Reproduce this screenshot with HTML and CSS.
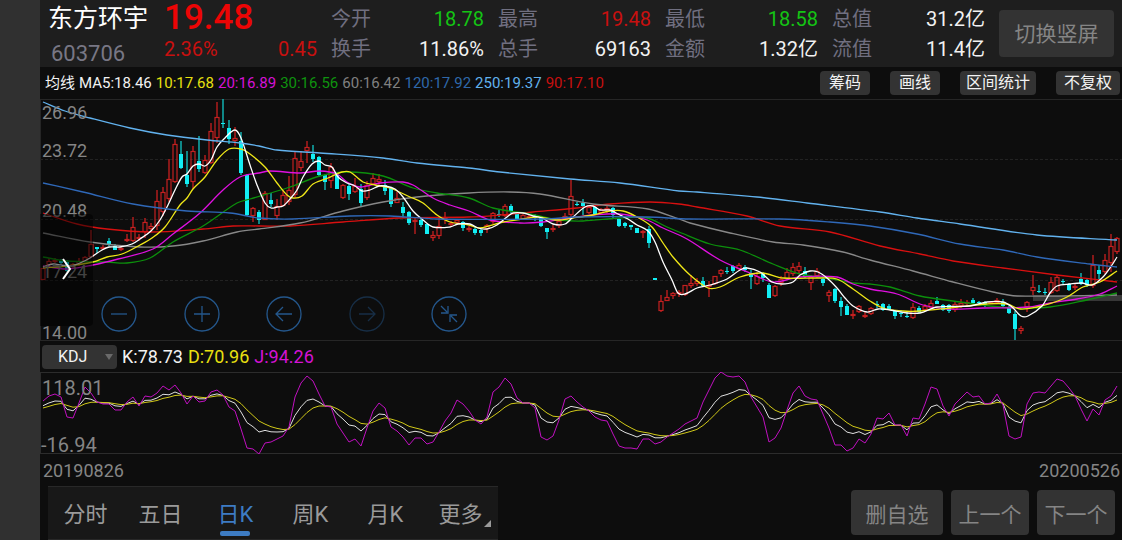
FILE: index.html
```html
<!DOCTYPE html>
<html lang="zh-CN">
<head>
<meta charset="utf-8">
<meta name="viewport" content="width=device-width, initial-scale=1">
<title>东方环宇 603706</title>
<link rel="stylesheet" href="styles.css">
</head>
<body>
<div class="app">
  <main class="screen">
    <header class="quote">
      <div class="identity">
        <h1 class="name">东方环宇</h1>
        <div class="code">603706</div>
      </div>
      <div class="price up">
        <div class="last">19.48</div>
        <div class="change"><span>2.36%</span><span>0.45</span></div>
      </div>
      <dl class="stats">
        <div><dt>今开</dt><dd class="down">18.78</dd></div>
        <div><dt>换手</dt><dd>11.86%</dd></div>
      </dl>
      <dl class="stats">
        <div><dt>最高</dt><dd class="up">19.48</dd></div>
        <div><dt>总手</dt><dd>69163</dd></div>
      </dl>
      <dl class="stats">
        <div><dt>最低</dt><dd class="down">18.58</dd></div>
        <div><dt>金额</dt><dd>1.32亿</dd></div>
      </dl>
      <dl class="stats">
        <div><dt>总值</dt><dd>31.2亿</dd></div>
        <div><dt>流值</dt><dd>11.4亿</dd></div>
      </dl>
      <button class="rotate" type="button">切换竖屏</button>
    </header>

    <div class="averages">
      <div class="legend">
        <span>均线</span>
        <span>MA5:18.46</span>
        <span class="ma10">10:17.68</span>
        <span class="ma20">20:16.89</span>
        <span class="ma30">30:16.56</span>
        <span class="ma60">60:16.42</span>
        <span class="ma120">120:17.92</span>
        <span class="ma250">250:19.37</span>
        <span class="ma90">90:17.10</span>
      </div>
      <div class="tools">
        <button type="button">筹码</button>
        <button type="button">画线</button>
        <button type="button" class="wide">区间统计</button>
        <button type="button">不复权</button>
      </div>
    </div>

    <section class="candles" aria-label="日K">
      <svg id="kline" class="plot" viewBox="40 99 1082 241" preserveAspectRatio="none"></svg>
      <span class="axis a1">26.96</span>
      <span class="axis a2">23.72</span>
      <span class="axis a3">20.48</span>
      <span class="axis a4">17.24</span>
      <span class="axis a5">14.00</span>
      <button class="drawer" type="button" aria-label="展开">
        <svg width="12" height="24" viewBox="0 0 12 24"><path d="M2 2 9 12 2 22"/></svg>
      </button>
      <div class="controls">
        <button type="button" aria-label="缩小"><svg viewBox="0 0 36 36"><circle cx="18" cy="18" r="17"/><path d="M10 18h16"/></svg></button>
        <button type="button" aria-label="放大"><svg viewBox="0 0 36 36"><circle cx="18" cy="18" r="17"/><path d="M10 18h16M18 10v16"/></svg></button>
        <button type="button" aria-label="左移"><svg viewBox="0 0 36 36"><circle cx="18" cy="18" r="17"/><path d="M26 18H10M17 11l-7 7 7 7"/></svg></button>
        <button type="button" aria-label="右移" disabled><svg viewBox="0 0 36 36"><circle cx="18" cy="18" r="17"/><path d="M10 18h16M19 11l7 7-7 7"/></svg></button>
        <button type="button" aria-label="收起"><svg viewBox="0 0 36 36"><circle cx="18" cy="18" r="17"/><path d="M10 10l6 6M17 10v7h-7M26 26l-6-6M19 26v-7h7"/></svg></button>
      </div>
    </section>

    <div class="indicator">
      <div class="picker">
        <select aria-label="指标"><option>KDJ</option></select>
        <svg width="8" height="6" viewBox="0 0 8 6"><path d="M0 0h8L4 6z"/></svg>
      </div>
      <span>K:78.73</span>
      <span class="ma10">D:70.96</span>
      <span class="ma20">J:94.26</span>
    </div>

    <section class="kdj" aria-label="KDJ">
      <svg id="kdj" class="plot" viewBox="40 372 1082 82" preserveAspectRatio="none"></svg>
      <span class="axis k1">118.01</span>
      <span class="axis k2">-16.94</span>
    </section>

    <div class="dates"><span>20190826</span><span>20200526</span></div>

    <footer class="bottom">
      <nav class="tabs">
        <a href="#">分时</a>
        <a href="#">五日</a>
        <a href="#" class="active" aria-current="page">日K</a>
        <a href="#">周K</a>
        <a href="#">月K</a>
        <a href="#" class="more">更多</a>
      </nav>
      <div class="actions">
        <button type="button" class="remove">删自选</button>
        <button type="button">上一个</button>
        <button type="button">下一个</button>
      </div>
    </footer>
  </main>
</div>
<script src="chart.js"></script>
</body>
</html>
```
FILE: styles.css
```css
* { box-sizing: border-box; }

body {
  margin: 0;
  background: #0d0d0d;
  color: #f2f2f2;
  font-family: Roboto, "Noto Sans CJK SC", sans-serif;
}

button, select {
  font: inherit;
  color: inherit;
  border: 0;
  margin: 0;
  padding: 0;
  cursor: pointer;
}

h1, dl, dd { margin: 0; }

.app {
  min-height: 100vh;
  padding-left: 40px;
  background: #303030;
}

.screen {
  min-height: 100vh;
  display: flex;
  flex-direction: column;
  background: #0d0d0d;
}

.up { color: #c8100f; }
.down { color: #14c414; }
.ma10 { color: #e8e010; }
.ma20 { color: #d512d5; }
.ma30 { color: #0f930f; }
.ma60 { color: #808080; }
.ma120 { color: #2f68aa; }
.ma250 { color: #62b2ee; }
.ma90 { color: #c8100f; }

/* Quote header */
.quote {
  display: grid;
  grid-template-columns: 102px repeat(5, 1fr) 115px;
  gap: 14px;
  height: 67px;
  padding: 0 8px;
  background: #1e1e1e;
  font-size: 20px;
  line-height: 30px;
  white-space: nowrap;
}

.name {
  font-size: 25px;
  font-weight: 400;
  line-height: 38px;
  color: #fff;
}

.code {
  padding-left: 3px;
  font-size: 22px;
  line-height: 32px;
  color: #787785;
}

.last {
  font-size: 35px;
  font-weight: 500;
  line-height: 36px;
  color: #ec0505;
}

.change {
  display: flex;
  justify-content: space-between;
  line-height: 26px;
}

.stats { padding-top: 4px; }

.stats div {
  display: flex;
  justify-content: space-between;
}

.stats dt { color: #706f80; }

.rotate {
  height: 47px;
  margin-top: 10px;
  border-radius: 4px;
  background: #333;
  color: #858585;
  font-size: 21px;
}

/* Moving averages */
.averages {
  display: flex;
  justify-content: space-between;
  align-items: center;
  height: 32px;
  padding: 0 2px 0 5px;
  font-size: 15px;
  line-height: 24px;
  white-space: nowrap;
}

.legend, .tools { display: flex; }
.legend { gap: 4px; align-items: baseline; }
.tools { gap: 20px; }

.tools button {
  min-width: 50px;
  height: 24px;
  padding: 0 8px;
  border-radius: 4px;
  background: #333;
  font-size: 16px;
  line-height: 24px;
}

.tools .wide { padding: 0 6px; }

/* Plots */
.candles, .kdj { position: relative; }
.candles { flex: 1 0 241px; }
.kdj { flex: 0 0 82px; }

.plot {
  position: absolute;
  inset: 0;
  width: 100%;
  height: 100%;
}

.axis {
  position: absolute;
  left: 2px;
  font-size: 18px;
  line-height: 20px;
  color: #858585;
}

.a1 { top: 4px; }
.a2 { top: 42px; }
.a3 { top: 102px; }
.a4 { top: 163px; }
.a5 { bottom: -3px; }

.kdj .axis { font-size: 20px; }
.kdj .k1 { top: 6px; }
.kdj .k2 { bottom: -1px; left: 1px; }

.drawer {
  position: absolute;
  left: 0;
  top: 115px;
  width: 53px;
  height: 112px;
  padding-top: 2px;
  border-radius: 0 4px 4px 0;
  background: rgba(0, 0, 0, 0.5);
}

.drawer path {
  fill: none;
  stroke: #fff;
  stroke-width: 2;
}

.controls {
  position: absolute;
  left: 61px;
  bottom: 8px;
  width: 366px;
  display: flex;
  justify-content: space-between;
}

.controls button {
  width: 36px;
  height: 36px;
  background: none;
}

.controls svg {
  display: block;
  fill: none;
  stroke: #24578c;
  stroke-width: 1.3;
}

.controls button:disabled { opacity: 0.45; }

/* Indicator row */
.indicator {
  display: flex;
  align-items: center;
  gap: 5px;
  height: 32px;
  padding-left: 2px;
  border-top: 1px solid #262626;
  font-size: 18px;
}

.picker {
  display: flex;
  align-items: center;
  width: 75px;
  height: 24px;
  padding-right: 4px;
  border-radius: 4px;
  background: #333;
}

.picker select {
  flex: 1;
  height: 24px;
  padding-left: 16px;
  appearance: none;
  background: none;
  font-size: 16px;
}

.picker path { fill: #6a6a6a; }

.dates {
  display: flex;
  justify-content: space-between;
  padding: 0 2px 0 3px;
  height: 32px;
  font-size: 18px;
  line-height: 34px;
  color: #858585;
}

/* Bottom bar */
.bottom {
  display: flex;
  justify-content: space-between;
  height: 54px;
  padding: 0 7px 0 8px;
  font-size: 21px;
  color: #9a9a9a;
  white-space: nowrap;
}

.tabs {
  display: flex;
  width: 450px;
  background: #181818;
  border-top: 1px solid #282828;
  border-bottom: 1px solid #282828;
  font-size: 22px;
}

.tabs a {
  position: relative;
  flex: 1;
  line-height: 55px;
  text-align: center;
  color: #9a9a9a;
  text-decoration: none;
}

.tabs .active { color: #3d7cc4; }

.tabs .active::after {
  content: "";
  position: absolute;
  left: 22px;
  bottom: 3px;
  width: 30px;
  height: 5px;
  border-radius: 2px;
  background: #3d7cc4;
}

.tabs .more::after {
  content: "";
  position: absolute;
  right: 7px;
  bottom: 12px;
  border-left: 7px solid transparent;
  border-bottom: 7px solid #9a9a9a;
}

.actions {
  display: flex;
  gap: 8px;
  padding: 4px 0 5px;
}

.actions button {
  min-width: 78px;
  border-radius: 4px;
  background: #333;
  color: #858585;
}

.actions .remove { min-width: 92px; }
```
FILE: chart.js
```js
const NS = "http://www.w3.org/2000/svg";
const START = 43;
const STEP = 6;

function add(svg, tag, attrs) {
  const el = document.createElementNS(NS, tag);
  for (const key in attrs) el.setAttribute(key, attrs[key]);
  svg.appendChild(el);
}

function line(svg, points, color, width) {
  add(svg, "polyline", {
    points, fill: "none", stroke: color, "stroke-width": width, "stroke-linejoin": "round"
  });
}

// Cubic curve through the points, with slopes taken from the neighbours.
function curve(svg, text, color, width) {
  const p = text.split(" ").map(pair => pair.split(",").map(Number));
  const last = p.length - 1;
  const slope = p.map((_, i) => {
    const a = p[Math.max(i - 1, 0)];
    const b = p[Math.min(i + 1, last)];
    return (b[1] - a[1]) / (b[0] - a[0]);
  });
  let d = `M${p[0]}`;
  for (let i = 0; i < last; i++) {
    const [x0, y0] = p[i];
    const [x1, y1] = p[i + 1];
    const h = (x1 - x0) / 3;
    d += `C${x0 + h},${y0 + h * slope[i]} ${x1 - h},${y1 - h * slope[i + 1]} ${x1},${y1}`;
  }
  add(svg, "path", { d, fill: "none", stroke: color, "stroke-width": width });
}

// Each candle: direction, high, body top, body bottom, low.
const candles = `
r268,268,280,280 r258,261,265,266 r258,260,261,263 c259,260,263,264 c260,262,271,272 r263,264,267,268
r258,261,265,266 r256,257,262,262 r230,244,257,257 c247,247,249,253 r245,247,248,250 c238,241,245,246
c244,246,250,250 r247,248,250,251 r234,239,241,242 r217,227,241,242 r234,237,238,241 r218,222,232,238
r223,226,229,231 r190,201,226,230 r187,192,212,216 r159,179,199,202 r139,144,182,183 c141,154,168,169
c151,175,184,187 r146,151,182,189 c136,161,169,172 r155,160,173,174 r123,131,163,164 r102,117,138,143
c99,123,124,128 c120,128,139,144 r127,138,141,146 c132,141,173,175 c174,175,215,216 r207,208,216,222
c210,212,220,224 r191,193,220,220 c193,200,204,207 r199,206,216,220 r190,195,206,206 r176,190,202,205
r151,158,195,198 r151,161,168,171 r141,147,151,163 c145,154,159,162 c156,157,175,177 c174,175,182,190
r163,167,181,188 c172,175,189,189 r184,185,198,199 c184,186,194,200 r178,186,192,193 c184,189,203,206
r181,185,198,200 r173,178,184,185 r174,179,182,186 c180,185,191,195 c187,188,204,207 r192,198,203,203
c202,207,213,218 c211,212,223,225 r218,220,222,234 c217,220,225,227 c224,224,234,234 r231,235,238,241
r217,226,236,239 r212,218,219,224 r221,223,224,226 r219,220,223,224 c221,222,228,231 r226,228,229,232
c227,229,233,235 c229,230,233,236 r224,225,229,233 r212,213,222,224 c210,214,215,217 r204,206,216,217
c204,206,211,213 c213,214,219,220 r214,215,219,220 r214,216,218,219 c214,216,218,221 c217,218,226,227
c228,228,232,239 r225,228,229,232 r218,221,226,228 r213,216,220,221 r180,196,215,217 c202,204,205,206
c199,203,206,215 r206,207,213,214 c206,207,214,215 r208,209,213,214 r206,208,210,213 c207,208,215,218
c218,219,226,227 c222,223,226,228 c225,225,227,230 c228,228,233,233 r230,231,232,238 c226,229,243,248
c278,278,280,280 r295,301,311,312 r290,297,301,301 r292,293,296,299 r290,292,294,297 r285,285,295,296
r275,283,286,288 r278,281,284,286 c277,281,286,287 r281,285,286,297 r276,276,284,285 r269,270,274,277
c267,271,272,274 c265,266,271,273 r263,265,269,271 c265,267,270,272 c270,273,277,289 r272,276,284,285
c272,274,278,282 c283,285,298,298 r285,286,296,297 r276,279,283,286 r268,272,279,280 r263,267,274,276
r262,266,271,273 c267,271,277,278 r275,277,283,290 r268,271,276,278 c276,279,283,286 r290,292,296,302
c288,289,301,303 c297,301,307,316 c304,306,315,315 r310,314,315,319 r305,306,312,313 r312,315,317,318
r307,308,314,315 c301,304,305,308 c303,304,310,311 c304,306,309,310 c310,311,316,319 c310,313,314,317
c311,316,317,318 r303,307,318,319 c306,308,312,313 r304,306,310,311 r300,303,308,309 c297,301,304,304
c304,305,310,311 c304,305,311,313 r302,304,310,312 r299,303,306,308 r300,302,304,307 c298,300,303,304
c301,302,303,304 c301,302,304,307 r301,302,303,304 r298,300,303,304 c299,302,306,307 c306,308,313,314
c311,314,329,340 r326,328,331,334 r301,302,307,312 r275,287,291,295 c285,291,292,293 c288,292,293,295
r277,282,293,294 r275,277,291,292 c279,281,282,284 c283,284,290,291 r284,286,288,290 c273,279,284,285
c279,280,285,287 r255,265,286,288 c265,270,274,279 r254,260,272,274 r234,246,263,272 r237,238,252,254
`.trim().split(/\s+/);

const averages = [
  ["#d81010", "43,213 77,224 107,229 150,232 203,229 233,226 259,226 290,226 343,222 400,218 469,217 500,215 533,212 577,208 610,204 650,202 679,204 697,207 747,216 780,226 830,232 880,246 920,254 953,261 1003,268 1057,275 1117,282"],
  ["#888888", "43,233 90,242 140,247 173,246 203,241 237,232 259,229 300,223 343,211 383,202 417,197 469,193 510,192 540,194 593,204 648,209 679,219 690,223 730,233 773,242 803,245 843,252 870,260 913,271 953,282 993,292 1017,296 1117,295"],
  ["#0c8f0c", "43,257 67,261 107,262 127,263 150,258 173,242 203,226 237,203 250,199 287,188 320,176 347,172 383,176 413,188 437,193 469,198 493,208 530,214 560,220 583,221 620,218 647,218 667,227 679,232 710,244 740,250 773,264 800,274 827,278 853,283 870,284 890,287 920,296 953,301 990,306 1017,308 1050,307 1087,300 1117,293"],
  ["#e010e0", "43,266 67,269 93,265 118,259 153,249 173,234 200,213 223,190 240,177 259,173 270,171 300,173 320,171 337,174 347,182 360,187 380,183 403,182 413,185 433,198 450,205 469,211 490,220 520,223 543,222 570,218 593,215 620,214 647,220 663,228 687,239 720,260 750,273 773,282 800,277 837,277 853,284 870,289 897,294 923,305 947,309 983,308 1030,307 1050,303 1077,299 1100,294 1117,286"],
  ["#f0e818", "43,268 67,266 93,262 107,257 122,254 140,245 152,238 165,227 180,205 187,198 193,189 205,177 217,160 229,149 241,149 250,154 265,167 277,183 287,195 293,198 302,196 313,184 328,178 342,172 350,172 363,182 375,185 390,188 410,197 423,203 437,215 450,222 469,225 480,228 503,222 523,219 538,217 557,220 573,218 593,215 610,211 623,211 637,217 652,227 663,243 673,257 690,275 708,288 720,287 740,277 762,273 783,278 820,278 837,279 853,289 870,301 883,308 903,311 920,311 950,308 987,304 1007,304 1020,309 1037,307 1055,302 1067,297 1083,287 1100,282 1117,271"],
  ["#ffffff", "43,267 53,264 61,265 70,266 80,263 90,258 102,250 109,247 120,247 132,244 140,239 151,231 160,220 168,205 175,190 182,177 187,174 193,166 199,164 205,166 211,160 217,147 225,138 235,130 241,138 250,165 257,185 265,203 271,208 277,207 283,206 290,199 297,190 303,177 312,164 319,161 325,165 332,167 338,177 347,183 355,186 362,191 370,190 379,186 385,186 395,189 403,197 413,211 423,220 433,227 450,227 458,224 470,224 478,228 487,229 497,225 507,217 513,213 523,213 533,216 542,218 553,224 565,224 573,217 585,207 593,206 600,210 610,210 618,214 628,219 637,225 648,231 655,242 663,262 672,280 678,293 685,294 697,288 710,285 727,279 740,270 747,268 760,272 772,282 782,284 793,282 800,275 810,271 818,272 827,278 837,288 845,298 853,306 867,312 878,309 890,310 907,313 920,313 937,307 970,306 987,302 1003,302 1012,307 1021,316 1028,316 1042,306 1050,293 1057,286 1070,284 1082,283 1092,285 1103,277 1112,265 1117,257"],
  ["#2f68b8", "43,183 83,192 133,204 187,211 230,213 259,218 293,219 350,216 390,216 437,219 543,219 577,217 647,217 690,219 780,219 830,222 870,226 917,234 960,244 1003,250 1037,257 1090,264 1117,267"],
  ["#62b2ee", "43,102 65,111 90,118 130,128 167,135 207,140 240,143 259,146 277,150 320,153 383,158 417,163 469,168 500,172 570,179 620,183 679,191 697,192 757,197 807,203 880,212 917,218 960,224 1037,235 1117,240"]
];

const kline = document.getElementById("kline");
add(kline, "path", { d: "M40 99.5H1122M40.5 99V340", stroke: "#262626" });
add(kline, "path", { d: "M40 159.5H1122M40 219.5H1122M40 280.5H1122", stroke: "#222", "stroke-dasharray": "3 2" });

candles.forEach((item, i) => {
  const up = item[0] === "r";
  const [high, top, bottom, low] = item.slice(1).split(",").map(Number);
  const x = START + i * STEP;
  if (up) {
    add(kline, "path", { d: `M${x} ${high}V${top}M${x} ${bottom}V${low}`, stroke: "#b01c1c", "stroke-width": 1.5 });
    add(kline, "rect", {
      x: x - 2, y: top + 0.5, width: 4, height: Math.max(bottom - top - 1, 1), fill: "none", stroke: "#c42020", "stroke-width": 1.2
    });
  } else {
    add(kline, "path", { d: `M${x} ${high}V${low}`, stroke: "#10b0b0", "stroke-width": 1.5 });
    add(kline, "rect", { x: x - 2, y: top, width: 4, height: Math.max(bottom - top, 1), fill: "#12eef4" });
  }
});
add(kline, "rect", { x: 1033, y: 295, width: 89, height: 6, fill: "#888", opacity: 0.35 });
averages.forEach(([color, points]) => curve(kline, points, color, 1.3));

const j = [
  401,396,394,397,417,418,403,387,393,402,404,404,410,410,402,397,406,396,397,393,386,390,385,393,404,396,402,401,392,390,
  395,407,411,429,448,449,454,443,442,439,436,427,397,383,376,381,394,406,407,424,433,442,439,446,428,411,403,408,427,431,
  437,445,438,438,444,442,432,421,413,400,404,411,420,424,417,392,387,378,384,398,403,403,408,437,440,436,420,399,396,402,
  407,411,417,420,421,434,446,448,448,449,439,439,444,442,437,433,429,424,421,418,402,390,378,372,376,377,376,382,397,407,
  417,442,438,428,410,393,386,396,399,400,414,428,445,445,451,448,439,443,434,418,419,413,425,425,436,418,419,404,387,389,
  406,416,404,398,392,397,396,404,403,394,405,436,439,437,404,393,392,393,386,379,381,388,396,409,421,409,415,400,396,386
];

// J = 3K - 2D and D is a 1/3 smoothing of K, so both follow from J.
const d = [];
const k = [];
j.forEach((value, i) => {
  d[i] = i ? (6 * d[i - 1] + value) / 7 : 408;
  k[i] = (value + 2 * d[i]) / 3;
});

const toPoints = series => series.map((y, i) => `${START + i * STEP},${y.toFixed(1)}`).join(" ");
const kdj = document.getElementById("kdj");
add(kdj, "path", { d: "M40 372.5H1122M40 453.5H1122M40.5 372V454", stroke: "#2c2c2c" });
line(kdj, toPoints(k), "#e0e0e0", 1);
line(kdj, toPoints(d), "#d0c818", 1);
line(kdj, toPoints(j), "#c010c0", 1);
```
